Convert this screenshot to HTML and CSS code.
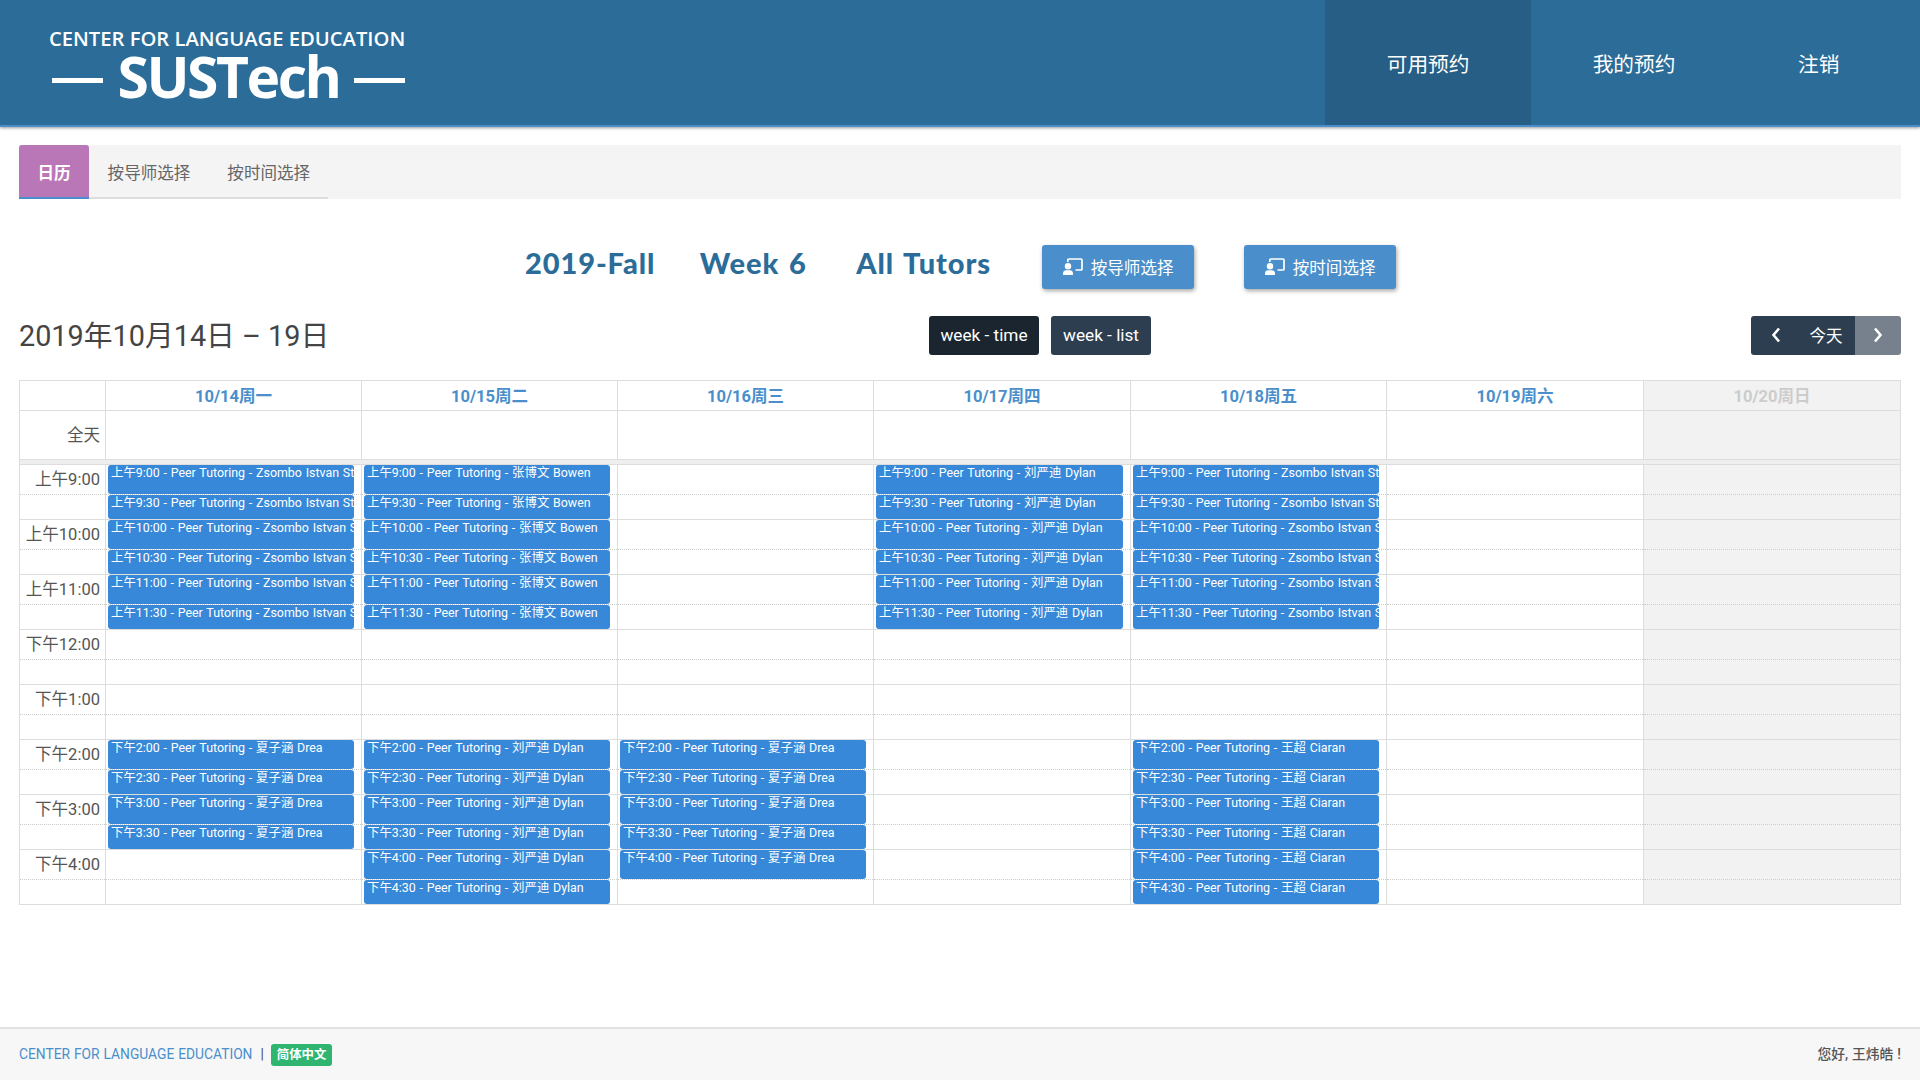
FILE: index.html
```html
<!DOCTYPE html>
<html lang="zh-CN">

<head>
  <meta charset="UTF-8" />
  <title>CENTER FOR LANGUAGE EDUCATION - SUSTech</title>
  <link rel="stylesheet" href="styles.css">
</head>

<body>
  <header class="top-bar">
    <a class="logo" href="#">
      <span class="logo-line">CENTER FOR LANGUAGE EDUCATION</span>
      <span class="logo-name"><i></i><b>SUSTech</b><i></i></span>
    </a>
    <nav class="top-nav">
      <a class="active" href="#">可用预约</a>
      <a href="#">我的预约</a>
      <a class="last" href="#">注销</a>
    </nav>
  </header>

  <main class="content">
    <ul class="tabs">
      <li class="active"><a href="#">日历</a></li>
      <li><a href="#">按导师选择</a></li>
      <li><a href="#">按时间选择</a></li>
    </ul>

    <div class="title-row">
      <h3>2019-Fall</h3>
      <h3>Week 6</h3>
      <h3>All Tutors</h3>
      <a class="action-btn first" href="#">
        <svg viewBox="0 0 20 17" width="20" height="17"><circle cx="5" cy="8.200" r="3.200" fill="#fff"/><path d="M0 17v-1.500C0 13.500 1.500 12.300 3 12.300h4c1.500 0 3 1.200 3 3.200V17z" fill="#fff"/><path d="M4.800 4V2a1 1 0 0 1 1-1H18a1 1 0 0 1 1 1v9a1 1 0 0 1-1 1h-5.500" fill="none" stroke="#fff" stroke-width="1.700"/></svg>
        按导师选择
      </a>
      <a class="action-btn" href="#">
        <svg viewBox="0 0 20 17" width="20" height="17"><circle cx="5" cy="8.200" r="3.200" fill="#fff"/><path d="M0 17v-1.500C0 13.500 1.500 12.300 3 12.300h4c1.500 0 3 1.200 3 3.200V17z" fill="#fff"/><path d="M4.800 4V2a1 1 0 0 1 1-1H18a1 1 0 0 1 1 1v9a1 1 0 0 1-1 1h-5.500" fill="none" stroke="#fff" stroke-width="1.700"/></svg>
        按时间选择
      </a>
    </div>

    <div class="cal-toolbar">
      <h2>2019年10月14日 – 19日</h2>
      <div class="view-btns">
        <button class="dark">week - time</button>
        <button>week - list</button>
      </div>
      <div class="nav-btns">
        <button class="prev"><svg viewBox="0 0 10 16" width="10" height="16"><path d="M8 1.500L2.500 8 8 14.500" fill="none" stroke="#fff" stroke-width="2.600"/></svg></button>
        <button class="today">今天</button>
        <button class="faded"><svg viewBox="0 0 10 16" width="10" height="16"><path d="M2 1.500L7.500 8 2 14.500" fill="none" stroke="#fff" stroke-width="2.600"/></svg></button>
      </div>
    </div>

    <table class="cal">
      <colgroup><col class="axis-col"><col class="day-col"><col class="day-col"><col class="day-col"><col class="day-col wide"><col class="day-col"><col class="day-col wide"><col></colgroup>
      <thead>
        <tr class="head-row"><th></th><th>10/14周一</th><th>10/15周二</th><th>10/16周三</th><th>10/17周四</th><th>10/18周五</th><th>10/19周六</th><th class="off">10/20周日</th></tr>
        <tr class="allday-row"><td class="axis">全天</td><td></td><td></td><td></td><td></td><td></td><td></td><td class="off"></td></tr>
        <tr class="divider"><td colspan="8"></td></tr>
      </thead>
      <tbody>
        <tr class="hour"><td class="axis">上午9:00</td><td><a class="ev">上午9:00 - Peer Tutoring - Zsombo Istvan St</a></td><td><a class="ev">上午9:00 - Peer Tutoring - 张博文 Bowen</a></td><td></td><td><a class="ev">上午9:00 - Peer Tutoring - 刘严迪 Dylan</a></td><td><a class="ev">上午9:00 - Peer Tutoring - Zsombo Istvan St</a></td><td></td><td class="off"></td></tr>
        <tr class="half"><td class="axis"></td><td><a class="ev">上午9:30 - Peer Tutoring - Zsombo Istvan St</a></td><td><a class="ev">上午9:30 - Peer Tutoring - 张博文 Bowen</a></td><td></td><td><a class="ev">上午9:30 - Peer Tutoring - 刘严迪 Dylan</a></td><td><a class="ev">上午9:30 - Peer Tutoring - Zsombo Istvan St</a></td><td></td><td class="off"></td></tr>
        <tr class="hour"><td class="axis">上午10:00</td><td><a class="ev">上午10:00 - Peer Tutoring - Zsombo Istvan St</a></td><td><a class="ev">上午10:00 - Peer Tutoring - 张博文 Bowen</a></td><td></td><td><a class="ev">上午10:00 - Peer Tutoring - 刘严迪 Dylan</a></td><td><a class="ev">上午10:00 - Peer Tutoring - Zsombo Istvan St</a></td><td></td><td class="off"></td></tr>
        <tr class="half"><td class="axis"></td><td><a class="ev">上午10:30 - Peer Tutoring - Zsombo Istvan St</a></td><td><a class="ev">上午10:30 - Peer Tutoring - 张博文 Bowen</a></td><td></td><td><a class="ev">上午10:30 - Peer Tutoring - 刘严迪 Dylan</a></td><td><a class="ev">上午10:30 - Peer Tutoring - Zsombo Istvan St</a></td><td></td><td class="off"></td></tr>
        <tr class="hour"><td class="axis">上午11:00</td><td><a class="ev">上午11:00 - Peer Tutoring - Zsombo Istvan St</a></td><td><a class="ev">上午11:00 - Peer Tutoring - 张博文 Bowen</a></td><td></td><td><a class="ev">上午11:00 - Peer Tutoring - 刘严迪 Dylan</a></td><td><a class="ev">上午11:00 - Peer Tutoring - Zsombo Istvan St</a></td><td></td><td class="off"></td></tr>
        <tr class="half"><td class="axis"></td><td><a class="ev">上午11:30 - Peer Tutoring - Zsombo Istvan St</a></td><td><a class="ev">上午11:30 - Peer Tutoring - 张博文 Bowen</a></td><td></td><td><a class="ev">上午11:30 - Peer Tutoring - 刘严迪 Dylan</a></td><td><a class="ev">上午11:30 - Peer Tutoring - Zsombo Istvan St</a></td><td></td><td class="off"></td></tr>
        <tr class="hour"><td class="axis">下午12:00</td><td></td><td></td><td></td><td></td><td></td><td></td><td class="off"></td></tr>
        <tr class="half"><td class="axis"></td><td></td><td></td><td></td><td></td><td></td><td></td><td class="off"></td></tr>
        <tr class="hour"><td class="axis">下午1:00</td><td></td><td></td><td></td><td></td><td></td><td></td><td class="off"></td></tr>
        <tr class="half"><td class="axis"></td><td></td><td></td><td></td><td></td><td></td><td></td><td class="off"></td></tr>
        <tr class="hour"><td class="axis">下午2:00</td><td><a class="ev">下午2:00 - Peer Tutoring - 夏子涵 Drea</a></td><td><a class="ev">下午2:00 - Peer Tutoring - 刘严迪 Dylan</a></td><td><a class="ev">下午2:00 - Peer Tutoring - 夏子涵 Drea</a></td><td></td><td><a class="ev">下午2:00 - Peer Tutoring - 王超 Ciaran</a></td><td></td><td class="off"></td></tr>
        <tr class="half"><td class="axis"></td><td><a class="ev">下午2:30 - Peer Tutoring - 夏子涵 Drea</a></td><td><a class="ev">下午2:30 - Peer Tutoring - 刘严迪 Dylan</a></td><td><a class="ev">下午2:30 - Peer Tutoring - 夏子涵 Drea</a></td><td></td><td><a class="ev">下午2:30 - Peer Tutoring - 王超 Ciaran</a></td><td></td><td class="off"></td></tr>
        <tr class="hour"><td class="axis">下午3:00</td><td><a class="ev">下午3:00 - Peer Tutoring - 夏子涵 Drea</a></td><td><a class="ev">下午3:00 - Peer Tutoring - 刘严迪 Dylan</a></td><td><a class="ev">下午3:00 - Peer Tutoring - 夏子涵 Drea</a></td><td></td><td><a class="ev">下午3:00 - Peer Tutoring - 王超 Ciaran</a></td><td></td><td class="off"></td></tr>
        <tr class="half"><td class="axis"></td><td><a class="ev">下午3:30 - Peer Tutoring - 夏子涵 Drea</a></td><td><a class="ev">下午3:30 - Peer Tutoring - 刘严迪 Dylan</a></td><td><a class="ev">下午3:30 - Peer Tutoring - 夏子涵 Drea</a></td><td></td><td><a class="ev">下午3:30 - Peer Tutoring - 王超 Ciaran</a></td><td></td><td class="off"></td></tr>
        <tr class="hour"><td class="axis">下午4:00</td><td></td><td><a class="ev">下午4:00 - Peer Tutoring - 刘严迪 Dylan</a></td><td><a class="ev">下午4:00 - Peer Tutoring - 夏子涵 Drea</a></td><td></td><td><a class="ev">下午4:00 - Peer Tutoring - 王超 Ciaran</a></td><td></td><td class="off"></td></tr>
        <tr class="half"><td class="axis"></td><td></td><td><a class="ev">下午4:30 - Peer Tutoring - 刘严迪 Dylan</a></td><td></td><td></td><td><a class="ev">下午4:30 - Peer Tutoring - 王超 Ciaran</a></td><td></td><td class="off"></td></tr>
      </tbody>
    </table>
  </main>

  <footer class="page-foot">
    <div>
      <a href="#">CENTER FOR LANGUAGE EDUCATION</a>
      <span class="sep">|</span>
      <span class="lang">简体中文</span>
    </div>
    <div class="hello">您好, 王炜皓 !</div>
  </footer>
</body>

</html>
```

FILE: styles.css
```css
* {
  box-sizing: border-box;
}

body {
  margin: 0;
  min-height: 100vh;
  display: flex;
  flex-direction: column;
  background: #fff;
  color: #555;
  font-family: Roboto, "Noto Sans CJK SC", sans-serif;
  font-size: 13.8px;
}

a {
  text-decoration: none;
}

/* top bar */
.top-bar {
  height: 127px;
  display: flex;
  justify-content: space-between;
  padding-right: 19.6px;
  background: #2b6c98;
  border-bottom: 2px solid #4a8fcb;
  box-shadow: 0 1px 3px rgba(0, 0, 0, 0.4);
}

.logo {
  display: flex;
  flex-direction: column;
  margin: 25px 0 0 49px;
  color: #fff;
  font-family: "Open Sans", sans-serif;
}

.logo-line {
  font-size: 20.2px;
  font-weight: 600;
  line-height: 26px;
  white-space: nowrap;
}

.logo-name {
  display: flex;
  align-items: center;
  justify-content: space-between;
  width: 356px;
  padding-left: 3px;
  line-height: 50px;
}

.logo-name b {
  font-size: 57px;
  font-weight: 700;
  letter-spacing: -2.5px;
}

.logo-name i {
  display: block;
  width: 51px;
  height: 5px;
  margin-top: 9px;
  background: #fff;
}

.top-nav {
  display: flex;
}

.top-nav a {
  display: flex;
  align-items: center;
  padding: 0 61.6px;
  color: #fff;
  font-size: 20.7px;
}

.top-nav .last {
  padding: 0 61px;
}

.top-nav a.active {
  background: #265e85;
}

/* tabs */
.content {
  flex: 1;
  padding: 18px 19px 0;
}

.tabs {
  display: flex;
  height: 54px;
  margin: 0;
  padding: 0;
  list-style: none;
  background: linear-gradient(#ddd, #ddd) 0 100% / 309px 2px no-repeat, #f4f4f4;
}

.tabs a {
  display: flex;
  align-items: center;
  height: 100%;
  padding: 0 18.5px;
  color: #666;
  font-size: 16.56px;
}

.tabs .active a {
  background: #b977b8;
  border-radius: 3px 3px 0 0;
  box-shadow: inset 0 -2px 0 #4a8fcb;
  color: #fff;
  font-weight: 700;
}

.title-row {
  display: flex;
  align-items: center;
  height: 44px;
  margin: 46px 0 0 506px;
}

.title-row h3 {
  margin: 0 49.6px 0 0;
  padding-bottom: 10px;
  color: #2b6c98;
  font-family: Lato, sans-serif;
  font-size: 29px;
  font-weight: 900;
  letter-spacing: 0.9px;
  word-spacing: 2px;
  white-space: nowrap;
}

.title-row h3:first-child {
  margin-right: 44.5px;
}

.action-btn {
  display: flex;
  align-items: center;
  justify-content: center;
  gap: 8px;
  width: 152px;
  height: 44px;
  margin-right: 50px;
  padding-bottom: 1px;
  background: #4a8fcb;
  border-radius: 3px;
  box-shadow: 1px 2px 4px rgba(0, 0, 0, 0.35);
  color: #fff;
  font-size: 16.56px;
}

.action-btn.first {
  margin-left: 1.5px;
}

/* calendar toolbar */
.cal-toolbar {
  display: flex;
  align-items: center;
  height: 39px;
  margin-top: 27px;
}

.cal-toolbar h2 {
  width: 910px;
  margin: 0;
  padding-bottom: 4px;
  color: #444;
  font-size: 28.8px;
  font-weight: 400;
  white-space: nowrap;
}

.cal-toolbar button {
  height: 39px;
  padding: 0 0 1px;
  border: 0;
  color: #fff;
  font-family: inherit;
  font-size: 17.2px;
  background: #2c3e50;
}

.view-btns {
  display: flex;
  gap: 12px;
}

.view-btns button {
  width: 100px;
  border-radius: 3px;
}

.view-btns .dark {
  width: 110px;
  background: #1a252f;
}

.nav-btns {
  display: flex;
  margin-left: auto;
}

.nav-btns button {
  width: 46px;
  display: flex;
  align-items: center;
  justify-content: center;
}

.nav-btns button:first-child {
  border-radius: 3px 0 0 3px;
}

.nav-btns button:last-child {
  border-radius: 0 3px 3px 0;
}

.nav-btns .prev {
  padding-left: 3px;
}

.nav-btns .today {
  width: 58px;
  font-size: 16.56px;
}

.nav-btns .faded {
  background: #77818d;
}

/* calendar grid */
.cal {
  width: 100%;
  margin-top: 25px;
  table-layout: fixed;
  border-collapse: collapse;
  border: 1px solid #ddd;
}

.axis-col {
  width: 86px;
}

.day-col {
  width: 256px;
}

.day-col.wide {
  width: 257px;
}

.cal th,
.cal td {
  border-left: 1px solid #ddd;
  border-right: 1px solid #ddd;
  padding: 0;
}

.cal th {
  height: 30px;
  padding-bottom: 2px;
  border-bottom: 1px solid #ddd;
  color: #4a8fcb;
  font-size: 16.56px;
  font-weight: 700;
}

.allday-row td {
  height: 49px;
  border-bottom: 1px solid #ddd;
}

.divider td {
  height: 5px;
  background: #eee;
  border-bottom: 1px solid #ddd;
}

.cal .off {
  background: #f2f2f2;
  color: #ccc;
}

.cal .axis {
  padding: 0 5px 3px 0;
  color: #555;
  font-size: 16.56px;
  text-align: right;
  white-space: nowrap;
}

.hour td {
  height: 30px;
  border-bottom: 1px dotted #ccc;
}

.half td {
  height: 25px;
  border-bottom: 1px solid #ddd;
}

.ev {
  display: block;
  overflow: hidden;
  margin: 0 7px 0 2px;
  padding: 0 3px;
  background: #3788d8;
  border-radius: 3px;
  color: #fff;
  font-size: 12.42px;
  line-height: 16px;
  word-spacing: 0.7px;
  white-space: nowrap;
}

.hour .ev {
  height: 29px;
}

.half .ev {
  height: 24px;
}

/* footer */
.page-foot {
  display: flex;
  align-items: center;
  justify-content: space-between;
  height: 53px;
  padding: 0 19px;
  background: #f7f7f7;
  border-top: 2px solid #e2e2e2;
  word-spacing: 0.5px;
}

.page-foot a {
  color: #4a8fcb;
}

.sep {
  margin: 0 3px 0 4px;
  color: #444;
}

.lang {
  display: inline-block;
  height: 22px;
  padding: 0 6px;
  background: #2fb56f;
  border-radius: 3px;
  color: #fff;
  font-size: 12.42px;
  font-weight: 700;
  line-height: 22px;
}

.hello {
  padding-bottom: 4px;
  color: #555;
  font-weight: 500;
}
```
